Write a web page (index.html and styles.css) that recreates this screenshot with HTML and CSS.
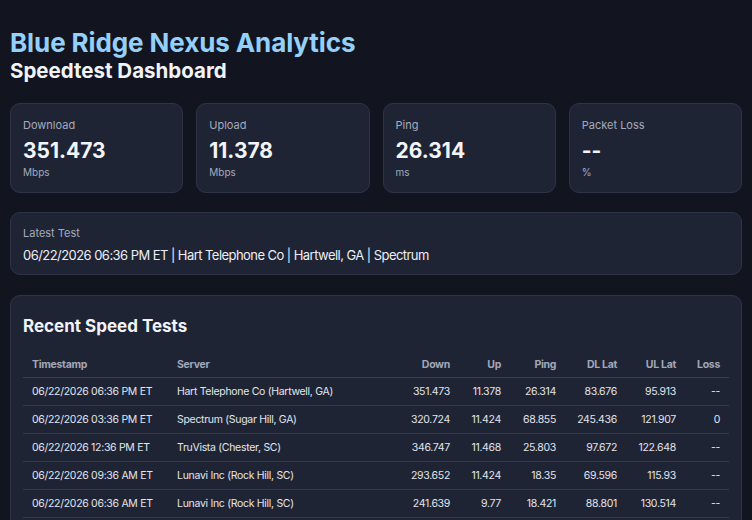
FILE: index.html
```html
<!DOCTYPE html>
<html lang="en">
<head>
  <meta charset="UTF-8" />
  <meta name="viewport" content="width=device-width, initial-scale=1" />
  <title>Speedtest Dashboard</title>
  <link rel="stylesheet" href="styles.css">
</head>
<body>
  <header class="page-header">
    <h1>Blue Ridge Nexus Analytics</h1>
    <h2>Speedtest Dashboard</h2>
  </header>

  <section class="stats">
    <div class="card stat">
      <div class="label">Download</div>
      <div class="value">351.473</div>
      <div class="unit">Mbps</div>
    </div>
    <div class="card stat">
      <div class="label">Upload</div>
      <div class="value">11.378</div>
      <div class="unit">Mbps</div>
    </div>
    <div class="card stat">
      <div class="label">Ping</div>
      <div class="value">26.314</div>
      <div class="unit">ms</div>
    </div>
    <div class="card stat">
      <div class="label">Packet Loss</div>
      <div class="value">--</div>
      <div class="unit">%</div>
    </div>
  </section>

  <section class="card latest">
    <div class="label">Latest Test</div>
    <div class="latest-text">06/22/2026 06:36 PM ET | Hart Telephone Co | Hartwell, GA | Spectrum</div>
  </section>

  <section class="card recent">
    <h3>Recent Speed Tests</h3>
    <table>
      <colgroup>
        <col class="col-time">
        <col>
        <col class="col-down">
        <col class="col-up">
        <col class="col-ping">
        <col class="col-dl">
        <col class="col-ul">
        <col class="col-loss">
      </colgroup>
      <thead>
        <tr>
          <th>Timestamp</th>
          <th>Server</th>
          <th class="num">Down</th>
          <th class="num">Up</th>
          <th class="num">Ping</th>
          <th class="num">DL Lat</th>
          <th class="num">UL Lat</th>
          <th class="num">Loss</th>
        </tr>
      </thead>
      <tbody>
        <tr>
          <td>06/22/2026 06:36 PM ET</td>
          <td>Hart Telephone Co (Hartwell, GA)</td>
          <td class="num">351.473</td>
          <td class="num">11.378</td>
          <td class="num">26.314</td>
          <td class="num">83.676</td>
          <td class="num">95.913</td>
          <td class="num">--</td>
        </tr>
        <tr>
          <td>06/22/2026 03:36 PM ET</td>
          <td>Spectrum (Sugar Hill, GA)</td>
          <td class="num">320.724</td>
          <td class="num">11.424</td>
          <td class="num">68.855</td>
          <td class="num">245.436</td>
          <td class="num">121.907</td>
          <td class="num">0</td>
        </tr>
        <tr>
          <td>06/22/2026 12:36 PM ET</td>
          <td>TruVista (Chester, SC)</td>
          <td class="num">346.747</td>
          <td class="num">11.468</td>
          <td class="num">25.803</td>
          <td class="num">97.672</td>
          <td class="num">122.648</td>
          <td class="num">--</td>
        </tr>
        <tr>
          <td>06/22/2026 09:36 AM ET</td>
          <td>Lunavi Inc (Rock Hill, SC)</td>
          <td class="num">293.652</td>
          <td class="num">11.424</td>
          <td class="num">18.35</td>
          <td class="num">69.596</td>
          <td class="num">115.93</td>
          <td class="num">--</td>
        </tr>
        <tr>
          <td>06/22/2026 06:36 AM ET</td>
          <td>Lunavi Inc (Rock Hill, SC)</td>
          <td class="num">241.639</td>
          <td class="num">9.77</td>
          <td class="num">18.421</td>
          <td class="num">88.801</td>
          <td class="num">130.514</td>
          <td class="num">--</td>
        </tr>
      </tbody>
    </table>
  </section>
</body>
</html>
```

FILE: styles.css
```css
* {
  box-sizing: border-box;
}

body {
  margin: 0;
  padding: 27px 10px 20px;
  background: #121520;
  color: #e5e7eb;
  font-family: Inter, "Noto Sans", sans-serif;
}

.page-header h1 {
  margin: 0;
  font-size: 26px;
  line-height: 32px;
  font-weight: 700;
  color: #93d0fb;
  letter-spacing: -0.1px;
}

.page-header h2 {
  margin: 0;
  font-size: 20.5px;
  line-height: 24px;
  font-weight: 700;
  color: #f1f3f9;
}

.card {
  background: #1f2435;
  border: 1px solid #2e3448;
  border-radius: 10px;
}

.stats {
  display: grid;
  grid-template-columns: repeat(4, 1fr);
  gap: 13px;
  margin-top: 20px;
}

.stat {
  padding: 14px 12px 12px;
  height: 90px;
}

.label {
  font-size: 11px;
  color: #a5abbb;
  line-height: 14px;
}

.value {
  margin-top: 6px;
  font-size: 21px;
  font-weight: 700;
  color: #f3f4f8;
  line-height: 26px;
}

.unit {
  margin-top: 2px;
  font-size: 10px;
  color: #a5abbb;
  line-height: 13px;
}

.latest {
  margin-top: 19px;
  padding: 13px 12px 12px;
  height: 63px;
}

.latest-text {
  margin-top: 7px;
  font-size: 13px;
  letter-spacing: -0.55px;
  color: #eceef4;
  line-height: 17px;
}

.recent {
  margin-top: 20px;
  padding: 19px 12px 10px;
}

.recent h3 {
  margin: 0 0 13px;
  font-size: 17px;
  font-weight: 700;
  color: #f1f3f9;
  line-height: 22px;
}

table {
  width: 100%;
  border-collapse: collapse;
  table-layout: fixed;
  font-size: 10.5px;
  letter-spacing: -0.3px;
}

.col-time { width: 145px; }
.col-down { width: 60px; }
.col-up { width: 51px; }
.col-ping { width: 55px; }
.col-dl { width: 61px; }
.col-ul { width: 59px; }
.col-loss { width: 44px; }

th {
  text-align: left;
  font-weight: 700;
  color: #a2a8b8;
  padding: 3px 9px 0;
  height: 27px;
  border-bottom: 1px solid #3a4054;
}

td {
  color: #e2e5ec;
  padding: 0 9px;
  height: 28px;
  border-bottom: 1px solid #343a4d;
  white-space: nowrap;
}

th.num,
td.num {
  text-align: right;
}
```
